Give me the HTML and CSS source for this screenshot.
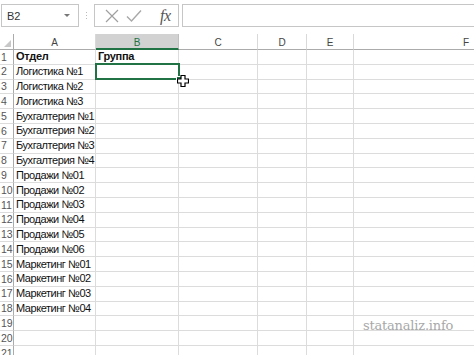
FILE: index.html
```html
<!DOCTYPE html>
<html>
<head>
<meta charset="utf-8">
<link rel="stylesheet" href="styles.css">
</head>
<body>
<div class="app">
  <div class="toolbar">
    <div class="namebox"><span>B2</span><span class="dd"></span></div>
    <div class="grip"><i></i><i></i><i></i></div>
    <div class="fxgroup">
      <svg class="ico-x" width="14" height="14" viewBox="0 0 14 14"><path d="M1 1L13 13M13 1L1 13" stroke="#a0a0a0" stroke-width="1.2" fill="none"/></svg>
      <svg class="ico-ok" width="16" height="14" viewBox="0 0 16 14"><path d="M1 7.5L5.5 12L15 1.5" stroke="#a8a8a8" stroke-width="1.4" fill="none"/></svg>
      <span class="fx">fx</span>
    </div>
    <div class="formula"></div>
  </div>
  <div class="sheet">
    <div class="grid">
      <div class="ch corner"><span class="tri"></span></div>
      <div class="ch">A</div><div class="ch sel">B</div><div class="ch">C</div><div class="ch">D</div><div class="ch">E</div><div class="ch colf">F</div>

      <div class="rh">1</div><div class="c b">Отдел</div><div class="c b">Группа</div><div class="c"></div><div class="c"></div><div class="c"></div><div class="c"></div>
      <div class="rh">2</div><div class="c">Логистика №1</div><div class="c"></div><div class="c"></div><div class="c"></div><div class="c"></div><div class="c"></div>
      <div class="rh">3</div><div class="c">Логистика №2</div><div class="c"></div><div class="c"></div><div class="c"></div><div class="c"></div><div class="c"></div>
      <div class="rh">4</div><div class="c">Логистика №3</div><div class="c"></div><div class="c"></div><div class="c"></div><div class="c"></div><div class="c"></div>
      <div class="rh">5</div><div class="c">Бухгалтерия №1</div><div class="c"></div><div class="c"></div><div class="c"></div><div class="c"></div><div class="c"></div>
      <div class="rh">6</div><div class="c">Бухгалтерия №2</div><div class="c"></div><div class="c"></div><div class="c"></div><div class="c"></div><div class="c"></div>
      <div class="rh">7</div><div class="c">Бухгалтерия №3</div><div class="c"></div><div class="c"></div><div class="c"></div><div class="c"></div><div class="c"></div>
      <div class="rh">8</div><div class="c">Бухгалтерия №4</div><div class="c"></div><div class="c"></div><div class="c"></div><div class="c"></div><div class="c"></div>
      <div class="rh">9</div><div class="c">Продажи №01</div><div class="c"></div><div class="c"></div><div class="c"></div><div class="c"></div><div class="c"></div>
      <div class="rh">10</div><div class="c">Продажи №02</div><div class="c"></div><div class="c"></div><div class="c"></div><div class="c"></div><div class="c"></div>
      <div class="rh">11</div><div class="c">Продажи №03</div><div class="c"></div><div class="c"></div><div class="c"></div><div class="c"></div><div class="c"></div>
      <div class="rh">12</div><div class="c">Продажи №04</div><div class="c"></div><div class="c"></div><div class="c"></div><div class="c"></div><div class="c"></div>
      <div class="rh">13</div><div class="c">Продажи №05</div><div class="c"></div><div class="c"></div><div class="c"></div><div class="c"></div><div class="c"></div>
      <div class="rh">14</div><div class="c">Продажи №06</div><div class="c"></div><div class="c"></div><div class="c"></div><div class="c"></div><div class="c"></div>
      <div class="rh">15</div><div class="c">Маркетинг №01</div><div class="c"></div><div class="c"></div><div class="c"></div><div class="c"></div><div class="c"></div>
      <div class="rh">16</div><div class="c">Маркетинг №02</div><div class="c"></div><div class="c"></div><div class="c"></div><div class="c"></div><div class="c"></div>
      <div class="rh">17</div><div class="c">Маркетинг №03</div><div class="c"></div><div class="c"></div><div class="c"></div><div class="c"></div><div class="c"></div>
      <div class="rh">18</div><div class="c">Маркетинг №04</div><div class="c"></div><div class="c"></div><div class="c"></div><div class="c"></div><div class="c"></div>
      <div class="rh">19</div><div class="c"></div><div class="c"></div><div class="c"></div><div class="c"></div><div class="c"></div><div class="c"></div>
      <div class="rh">20</div><div class="c"></div><div class="c"></div><div class="c"></div><div class="c"></div><div class="c"></div><div class="c"></div>
      <div class="rh">21</div><div class="c"></div><div class="c"></div><div class="c"></div><div class="c"></div><div class="c"></div><div class="c"></div>
    </div>
    <div class="selection"><span class="handle"></span></div>
    <svg class="cursor" width="12" height="12" viewBox="0 0 12 12"><path d="M4 0.5H8V4H11.5V8H8V11.5H4V8H0.5V4H4Z" fill="#fff" stroke="#000" stroke-width="1.2"/></svg>
    <div class="watermark">statanaliz.info</div>
  </div>
</div>
</body>
</html>
```
FILE: styles.css
```css
* { box-sizing: border-box; }
html, body { margin: 0; padding: 0; background: #fff; }
body { width: 474px; height: 355px; overflow: hidden; font-family: "Liberation Sans", Arial, sans-serif; color: #222; }
.app { display: flex; flex-direction: column; }
.toolbar { height: 34px; display: flex; align-items: flex-start; padding-top: 4px; padding-left: 1px; }
.namebox { width: 78px; height: 23px; border: 1px solid #c6c6c6; display: flex; align-items: center; justify-content: space-between; padding: 0 8px 0 5px; font-size: 11px; color: #333; }
.dd { width: 0; height: 0; border-left: 3px solid transparent; border-right: 3px solid transparent; border-top: 3px solid #777; }
.grip { width: 15px; height: 23px; display: flex; flex-direction: column; align-items: center; justify-content: center; gap: 2px; }
.grip i { width: 1px; height: 1px; background: #bbb; display: block; }
.fxgroup { width: 85px; height: 23px; border: 1px solid #c6c6c6; display: flex; align-items: center; padding-left: 10px; }
.ico-x { margin-right: 7px; }
.ico-ok { margin-right: 18px; }
.fx { font-family: "Liberation Serif", serif; font-style: italic; font-size: 16px; color: #555; letter-spacing: -0.5px; }
.formula { flex: 1; height: 23px; margin-left: 3px; border: 1px solid #c6c6c6; border-right: none; }
.sheet { position: relative; }
.grid { display: grid; grid-template-columns: 14px 82px 83px 79px 49px 47px 1fr; grid-template-rows: 16px repeat(21, 14.8px); }
.ch { border-right: 1px solid #d9d9d9; border-bottom: 1px solid #ababab; font-size: 10px; color: #444; display: flex; align-items: center; justify-content: center; padding-top: 2px; }
.ch.colf { justify-content: flex-end; padding-right: 5px; border-right: none; }
.ch.sel { background: #d2d2d2; color: #217346; border-bottom: 2px solid #217346; border-right-color: #c0c0c0; }
.corner { position: relative; border-right-color: #ababab; }
.tri { position: absolute; right: 2px; bottom: 2px; width: 0; height: 0; border-left: 7px solid transparent; border-bottom: 7px solid #c8c8c8; }
.rh { border-right: 1px solid #ababab; border-bottom: 1px solid #dcdcdc; font-size: 10.5px; color: #555; display: flex; align-items: center; padding-left: 1px; line-height: 1; }
.c { border-right: 1px solid #dcdcdc; border-bottom: 1px solid #dcdcdc; font-size: 11px; color: #111; display: flex; align-items: center; padding-left: 2px; white-space: nowrap; line-height: 1; letter-spacing: -0.45px; }
.c:nth-child(7n) { border-right: none; }
.c.b { font-weight: bold; letter-spacing: -0.3px; }
.selection { position: absolute; left: 95px; top: 29px; width: 85px; height: 17px; border: 2px solid #217346; }
.handle { position: absolute; right: -4px; bottom: -4px; width: 6px; height: 6px; background: #217346; border: 1px solid #fff; }
.cursor { position: absolute; left: 177px; top: 41px; }
.watermark { position: absolute; left: 363px; top: 284px; font-family: "DejaVu Serif", serif; font-size: 13px; color: #a8a8a8; letter-spacing: -0.2px; }
```
